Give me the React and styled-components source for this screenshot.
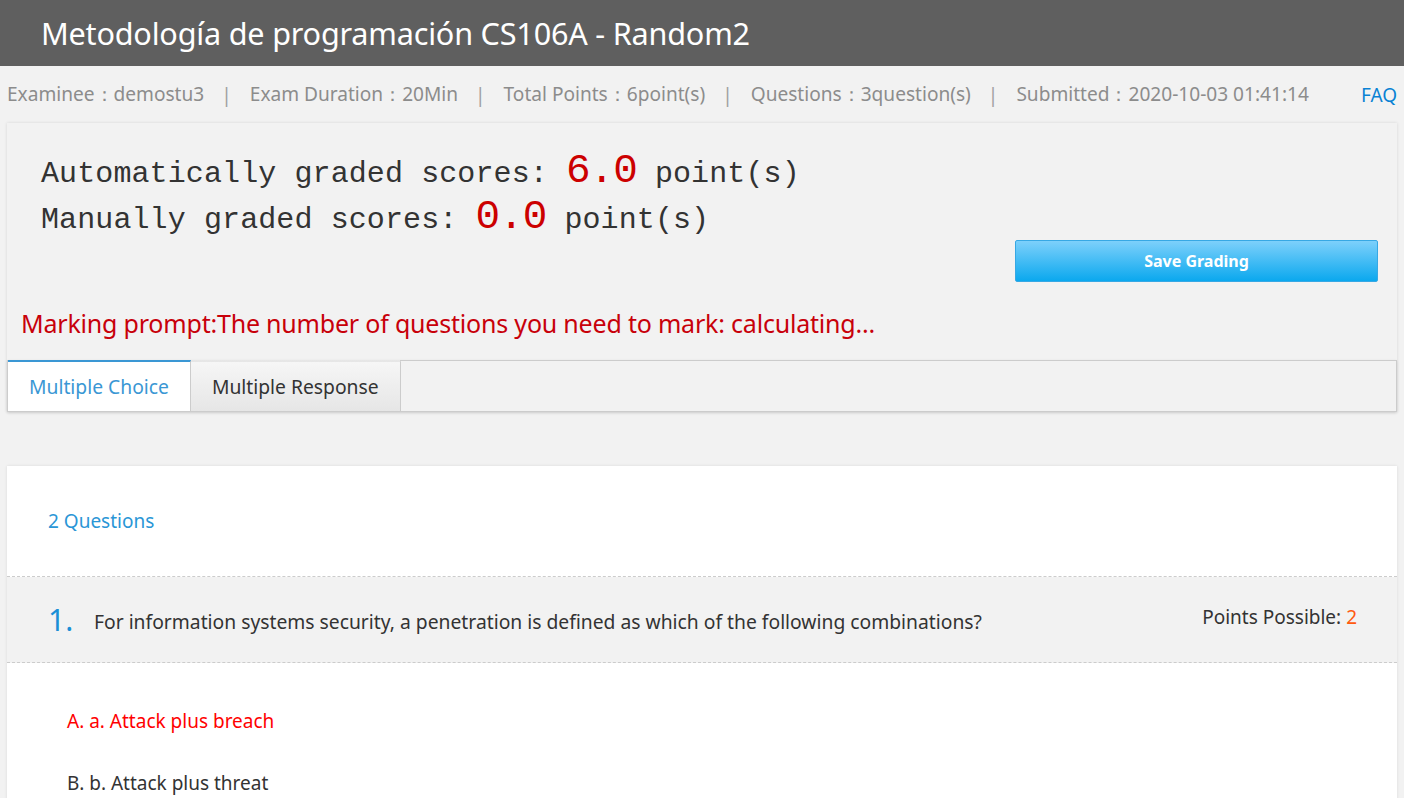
import React from "react";
import styled, { createGlobalStyle } from "styled-components";

const GlobalStyle = createGlobalStyle`
  html, body {
    margin: 0;
    padding: 0;
    background: #f2f2f2;
    font-family: "Noto Sans", "Open Sans", sans-serif;
  }
`;

const Page = styled.div`
  width: 100%;
  min-height: 798px;
  background: #f2f2f2;
`;

const TitleBar = styled.div`
  height: 66px;
  background: #5f5f5f;
  color: #fff;
  display: flex;
  align-items: center;
  padding-left: 41px;
  font-size: 30.6px;
  letter-spacing: -0.2px;
`;

const InfoBar = styled.div`
  height: 57px;
  display: flex;
  align-items: center;
  justify-content: space-between;
  padding: 0 7px;
  color: #8c8c8c;
  font-size: 19.1px;
`;

const InfoItems = styled.div`
  display: flex;
  align-items: center;
`;

const Sep = styled.span`
  margin: 0 18px 0 17px;
  color: #a0a0a0;
`;

const Faq = styled.a`
  color: #0a82d4;
  text-decoration: none;
  font-size: 19px;
`;

const Wrap = styled.div`
  padding: 0 7px;
`;

const ScorePanel = styled.div`
  background: #f2f2f2;
  box-shadow: 0 0 3px rgba(0, 0, 0, 0.12);
`;

const ScoreBody = styled.div`
  padding: 27px 19px 0 34px;
  display: grid;
  grid-template-columns: 1fr 363px;
`;

const ScoreLines = styled.div`
  font-family: "Liberation Mono", "DejaVu Sans Mono", monospace;
  color: #333;
  font-size: 30px;
  line-height: 43px;
  letter-spacing: 0.1px;
`;

const Big = styled.span`
  color: #c00;
  font-size: 41px;
  letter-spacing: -1px;
`;

const ButtonCol = styled.div`
  display: flex;
  align-items: flex-start;
  padding-top: 90px;
`;

const SaveButton = styled.button`
  width: 363px;
  height: 42px;
  border: 1px solid #37a8e4;
  border-radius: 2px;
  background: linear-gradient(#7dd0fb, #0ba8ee);
  color: #fff;
  font-family: "Noto Sans", sans-serif;
  font-weight: 700;
  font-size: 16px;
`;

const Prompt = styled.div`
  color: #c8000a;
  font-size: 25px;
  padding: 24px 14px 20px;
  letter-spacing: -0.2px;
`;

const TabBar = styled.div`
  display: flex;
  border: 1px solid #ccc;
  box-shadow: 0 1px 3px rgba(0, 0, 0, 0.1);
  background: #f2f2f2;
`;

const Tab = styled.div`
  height: 51px;
  display: flex;
  align-items: center;
  padding: 0 21px;
  font-size: 19.3px;
  color: ${(p) => (p.$active ? "#3a97d4" : "#333")};
  background: ${(p) => (p.$active ? "#fff" : "linear-gradient(#f6f6f6, #e6e6e6)")};
  border-top: 2px solid ${(p) => (p.$active ? "#3a97d4" : "transparent")};
  border-right: 1px solid #ccc;
  box-sizing: border-box;
  margin-top: -1px;
`;

const Card = styled.div`
  margin-top: 54px;
  background: #fff;
  box-shadow: 0 0 3px rgba(0, 0, 0, 0.1);
`;

const CardHead = styled.div`
  height: 110px;
  display: flex;
  align-items: center;
  padding-left: 41px;
  color: #2a96d6;
  font-size: 19px;
  border-bottom: 1px dashed #ccc;
`;

const QuestionRow = styled.div`
  height: 85px;
  background: #f2f2f2;
  border-bottom: 1px dashed #ccc;
  display: flex;
  align-items: center;
  padding: 0 40px 0 41px;
`;

const QNum = styled.span`
  color: #1a8fd6;
  font-size: 30px;
  width: 46px;
`;

const QText = styled.span`
  flex: 1;
  color: #333;
  font-size: 19.3px;
  padding-top: 3px;
`;

const Points = styled.span`
  color: #333;
  font-size: 19px;
  margin-top: -6px;
`;

const Orange = styled.span`
  color: #ff5a0f;
`;

const Options = styled.div`
  padding: 45px 60px 0;
`;

const Option = styled.div`
  font-size: 19px;
  height: 62px;
  color: ${(p) => (p.$correct ? "#f00" : "#333")};
`;

export default function App() {
  return (
    <Page>
      <GlobalStyle />
      <TitleBar>Metodología de programación CS106A - Random2</TitleBar>
      <InfoBar>
        <InfoItems>
          <span>Examinee：demostu3</span>
          <Sep>|</Sep>
          <span>Exam Duration：20Min</span>
          <Sep>|</Sep>
          <span>Total Points：6point(s)</span>
          <Sep>|</Sep>
          <span>Questions：3question(s)</span>
          <Sep>|</Sep>
          <span>Submitted：2020-10-03 01:41:14</span>
        </InfoItems>
        <Faq href="#">FAQ</Faq>
      </InfoBar>
      <Wrap>
        <ScorePanel>
          <ScoreBody>
            <ScoreLines>
              <div>
                Automatically graded scores: <Big>6.0</Big> point(s)
              </div>
              <div>
                Manually graded scores: <Big>0.0</Big> point(s)
              </div>
            </ScoreLines>
            <ButtonCol>
              <SaveButton>Save Grading</SaveButton>
            </ButtonCol>
          </ScoreBody>
          <Prompt>Marking prompt:The number of questions you need to mark: calculating...</Prompt>
          <TabBar>
            <Tab $active>Multiple Choice</Tab>
            <Tab>Multiple Response</Tab>
          </TabBar>
        </ScorePanel>
        <Card>
          <CardHead>2 Questions</CardHead>
          <QuestionRow>
            <QNum>1.</QNum>
            <QText>
              For information systems security, a penetration is defined as which of the following combinations?
            </QText>
            <Points>
              Points Possible: <Orange>2</Orange>
            </Points>
          </QuestionRow>
          <Options>
            <Option $correct>A. a. Attack plus breach</Option>
            <Option>B. b. Attack plus threat</Option>
          </Options>
        </Card>
      </Wrap>
    </Page>
  );
}
